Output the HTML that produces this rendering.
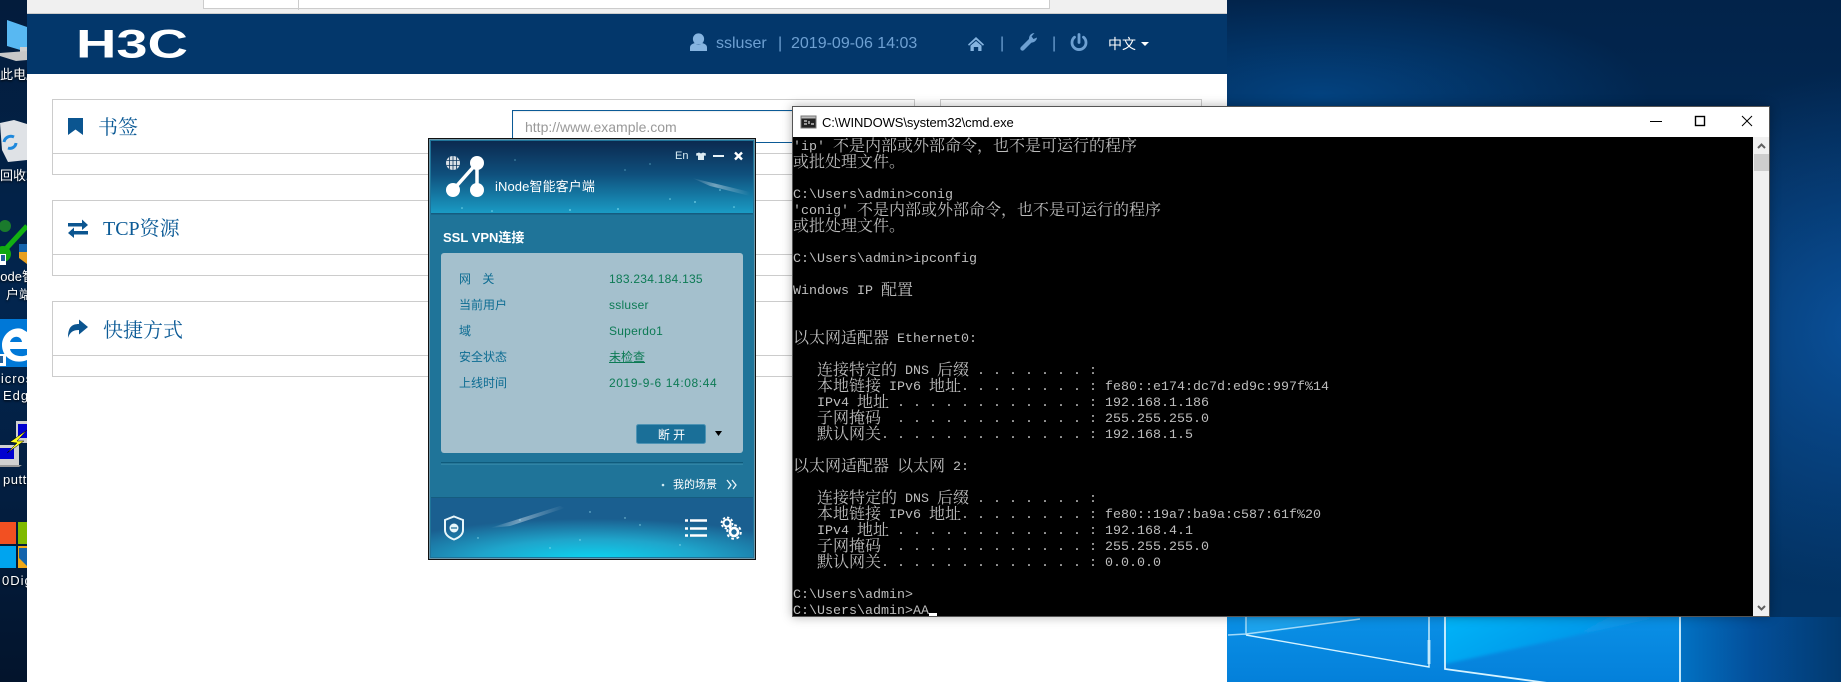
<!DOCTYPE html>
<html lang="zh"><head><meta charset="utf-8"><title>H3C</title>
<style>
*{box-sizing:border-box;margin:0;padding:0}
html,body{width:1841px;height:682px;overflow:hidden;background:#02244a;font-family:"Liberation Sans","Noto Sans CJK SC",sans-serif}
.a{position:absolute}
#bg{left:0;top:0;width:1841px;height:682px;background:
radial-gradient(ellipse 260px 260px at 1860px 330px,#0a5099,rgba(10,80,153,0) 100%),
radial-gradient(ellipse 330px 100px at 1320px 95px,#03427f,rgba(3,66,127,0) 100%),
radial-gradient(ellipse 200px 90px at 1290px 300px,#04488c,rgba(3,74,146,0) 100%),
linear-gradient(#02234a,#03305f 60%,#023466)}
#left{left:0;top:0;width:27px;height:682px;overflow:hidden;background:linear-gradient(#031c3c,#02254e 45%,#031f42 70%,#03142c);color:#fff;font-size:13px;text-shadow:0 1px 2px #000}
#left span{position:absolute;white-space:nowrap;line-height:16px}
#page{left:27px;top:0;width:1200px;height:682px;background:#fff}
#top{left:27px;top:0;width:1200px;height:14px;background:#f0f0f0;border-bottom:1px solid #ccc}
#addr{left:203px;top:-1px;width:847px;height:10px;background:#fff;border:1px solid #ccc}
#hd{left:27px;top:14px;width:1200px;height:60px;background:#03376b}
.p{position:absolute;border:1px solid #ccc;background:#fff}
.p .ln{position:absolute;left:0;right:0;top:53px;border-top:1px solid #ccc}
.tt{position:absolute;color:#0b5a96;font:20px/28px "Liberation Serif","Noto Serif CJK SC",serif;white-space:nowrap}
.ht{position:absolute;color:#6ea0d2;font-size:16px;line-height:20px;white-space:nowrap}
#inp{left:512px;top:110px;width:300px;height:33px;background:#fff;border:1px solid #0b5a96;color:#999;font-size:14px;line-height:20px;padding:6px 12px;box-shadow:inset 0 1px 1px rgba(0,0,0,.08)}
#cmd{left:792px;top:106px;width:978px;height:511px;background:#fff;border:1px solid #555;box-shadow:0 0 10px rgba(0,0,0,.3);overflow:hidden}
#ctl{position:absolute;left:29px;top:7px;font-size:13px;line-height:18px;letter-spacing:-.1px;color:#000;white-space:nowrap}
#term{position:absolute;left:0;top:30px;width:960px;height:480px;background:#000;color:#bdbdbd;font:13.333px/16px "Liberation Mono","Noto Serif CJK SC",monospace;overflow:hidden}
.l{height:16px;white-space:pre;line-height:21px}
.l i{font:16px/16px "Noto Serif CJK SC","Noto Sans CJK SC",serif;display:inline-block;height:16px;vertical-align:top}
#sb{position:absolute;left:960px;top:30px;width:17px;height:480px;background:#f0f0f0}
#ino{left:429px;top:139px;width:326px;height:420px;background:#1f7499;border:1px solid #6d97aa;box-shadow:0 0 0 1px #111}
#ino div,#ino span{position:absolute;white-space:nowrap}
.lb{left:29px;color:#0d6c92;font-size:12px;line-height:16px}
.vl{left:179px;color:#0c7a54;font-size:12px;line-height:16px;letter-spacing:.25px}
</style></head><body>
<div class="a" id="bg"></div>
<svg class="a" style="left:0;top:0" width="1841" height="682">
<defs>
<linearGradient id="lg1" x1="0" y1="0" x2="0" y2="1"><stop offset="0" stop-color="#0a90e6"/><stop offset="1" stop-color="#0480da"/></linearGradient>
<linearGradient id="lg2" x1="0" y1="0" x2="1" y2="0"><stop offset="0" stop-color="#0272c4"/><stop offset=".45" stop-color="#034f9a"/><stop offset="1" stop-color="#023a70"/></linearGradient>
<linearGradient id="lg3" x1="0" y1="0" x2="1" y2=".4"><stop offset="0" stop-color="#00b4f8"/><stop offset="1" stop-color="#0a8de4"/></linearGradient>
<filter id="bl"><feGaussianBlur stdDeviation="1.5"/></filter>
</defs>
<rect x="1680" y="617" width="161" height="65" fill="url(#lg2)"/>
<rect x="1227" y="617" width="453" height="65" fill="url(#lg1)"/>
<polygon points="1445,617 1660,617 1445,664" fill="url(#lg3)" filter="url(#bl)"/>
<polygon points="1246,617 1358,617 1246,635" fill="#1aa2ec" filter="url(#bl)"/>
<g fill="none" stroke="#d6f3ff">
<path d="M1246 617V635M1228 635L1246 634L1360 619" stroke-width="1.500" opacity=".75"/>
<path d="M1246 635L1429 667V617" stroke-width="1.400"/>
<path d="M1429 640V664" stroke-width="3" opacity=".7"/>
<path d="M1445 617V669L1650 697" stroke-width="1.800"/>
<path d="M1680 617V682" stroke-width="1.800"/>
</g>
</svg>

<div class="a" id="left">
<svg class="a" style="left:0;top:0" width="27" height="682">
<polygon points="7,20 27,27 27,52 7,46" fill="#58b8f2"/>
<rect x="20" y="47" width="7" height="6" fill="#d0d0d0"/>
<polygon points="0,53 27,51 27,60 16,61 0,56" fill="#c8c8c8"/>
<polygon points="0,123 14,120 27,124 27,160 8,162 2,150" fill="#dfe2e6"/>
<path d="M4 142a7 7 0 0 1 10-5M16 143a6 6 0 0 1-8 5" fill="none" stroke="#1e88dc" stroke-width="3"/>
<circle cx="5" cy="226" r="6" fill="#1a7a2c"/>
<path d="M3 252L27 226" stroke="#12b012" stroke-width="5"/>
<circle cx="3" cy="254" r="8" fill="#12a812"/>
<rect x="0" y="254" width="6" height="11" fill="#fff"/>
<rect x="1" y="255" width="4" height="6" fill="#26609a"/>
<path d="M19 244H27V264L19 258Z" fill="#e8a020"/><path d="M19 244H27V252H19Z" fill="#1464ac"/>
<rect x="0" y="319" width="27" height="48" fill="#0078d7"/>
<path d="M2 345C2 334 13 326 22 329L27 332V349H10C11 355 20 358 27 355V360C15 365 2 358 2 345ZM10 342H22C21 335 12 335 10 342Z" fill="#fff"/>
<rect x="0" y="354" width="6" height="12" fill="#fff"/><rect x="0" y="356" width="3" height="7" fill="#26609a"/>
<rect x="16" y="421" width="11" height="22" fill="#d0d0d0"/><rect x="18" y="424" width="9" height="14" fill="#0000d0"/>
<rect x="0" y="445" width="19" height="20" fill="#d0d0d0"/><rect x="0" y="448" width="14" height="11" fill="#0000d0"/>
<polygon points="0,465 22,465 19,467 0,467" fill="#999"/>
<polygon points="27,430 10,442 17,443 7,453 24,441 17,441" fill="#ffff20" stroke="#000" stroke-width=".5"/>
<rect x="0" y="522" width="16" height="22" fill="#f25022"/>
<rect x="18" y="522" width="9" height="22" fill="#7fba00"/>
<rect x="0" y="546" width="16" height="22" fill="#00a4ef"/>
<rect x="18" y="546" width="9" height="22" fill="#f0a818"/>
<path d="M19 548H27V566L19 558Z" fill="#1464ac"/>
</svg>
<span style="left:0;top:67px">此电脑</span>
<span style="left:0;top:168px">回收站</span>
<span style="left:-12px;top:269px">iNode智能</span>
<span style="left:6px;top:287px">户端</span>
<span style="left:-11px;top:371px;letter-spacing:1px">Micros</span>
<span style="left:3px;top:388px;letter-spacing:1px">Edge</span>
<span style="left:3px;top:472px;letter-spacing:.5px">putty</span>
<span style="left:2px;top:573px;letter-spacing:1px">0Digi</span>
</div>

<div class="a" id="page"></div>
<div class="a" id="top"></div>
<div class="a" id="addr"><div class="a" style="left:94px;top:0;height:10px;border-left:1px solid #ccc"></div></div>
<div class="a" id="hd"></div>
<svg class="a" style="left:0;top:14px" width="1227" height="60">
<text x="76" y="43.500" font-family="Liberation Sans" font-weight="700" font-size="40" fill="#fff" textLength="112" lengthAdjust="spacingAndGlyphs">H3C</text>
</svg>
<div class="ht" style="left:716px;top:34px">ssluser</div>
<div class="ht" style="left:778px;top:34px">|</div>
<div class="ht" style="left:791px;top:34px">2019-09-06 14:03</div>
<div class="ht" style="left:1000px;top:34px">|</div>
<div class="ht" style="left:1052px;top:34px">|</div>
<div class="a" style="left:1108px;top:34px;color:#fff;font-size:14px;line-height:20px">中文</div>
<svg class="a" style="left:680px;top:25px" width="480" height="40">
<g fill="#86b4e0" transform="translate(-680,-25)">
<circle cx="698.500" cy="39" r="5.600"/><path d="M690 51V47.500C690 44.500 693 43.500 695 43C697 45.500 700 45.500 702 43C704 43.500 707 44.500 707 47.500V51Z"/>
</g>
<g transform="translate(-680,-25)">
<path d="M976 37L984 44.500L983 45.700L976 39.600L969 45.700L968 44.500ZM970.500 45.600L976 41L981.500 45.600V51H978.200V47H973.800V51H970.500Z" fill="#86b4e0"/>
<path d="M1022.500 48.500L1030.500 40.500" stroke="#6ea0d2" stroke-width="4.400" stroke-linecap="round"/>
<path d="M1037 37.500A5.500 5.500 0 0 1 1029 42L1029 38A5.500 5.500 0 0 1 1034.500 33L1031.500 36.500L1033.500 39Z" fill="#6ea0d2"/>
<path d="M1074.500 37.200A7 7 0 1 0 1083.500 37.200" fill="none" stroke="#6ea0d2" stroke-width="2.800" stroke-linecap="round"/>
<path d="M1079 34.500V42.500" stroke="#6ea0d2" stroke-width="2.800" stroke-linecap="round"/>
<polygon points="1141,42 1149,42 1145,46" fill="#fff"/>
</g></svg>

<div class="p" style="left:52px;top:99px;width:863px;height:76px"><div class="ln"></div></div>
<div class="p" style="left:940px;top:99px;width:262px;height:76px"><div class="ln"></div></div>
<div class="p" style="left:52px;top:200px;width:863px;height:76px"><div class="ln"></div></div>
<div class="p" style="left:940px;top:200px;width:262px;height:76px"><div class="ln"></div></div>
<div class="p" style="left:52px;top:301px;width:863px;height:76px"><div class="ln"></div></div>
<div class="p" style="left:940px;top:301px;width:262px;height:76px"><div class="ln"></div></div>
<div class="tt" style="left:98px;top:114px">书签</div>
<div class="tt" style="left:103px;top:215px">TCP资源</div>
<div class="tt" style="left:103px;top:317px">快捷方式</div>
<svg class="a" style="left:0;top:0" width="100" height="350">
<path d="M68 118H83V135L75.500 129.500L68 135Z" fill="#0b5590"/>
<path d="M68 224H82V220.500L88 226L82 231V227.500H68ZM88 232H74V228.500L68 234L74 239V235.500H88Z" fill="#0b5590" transform="translate(0,-1)"/>
<path d="M88 327L79 319.500V324C71 324 68 328 68 338C70 332 73 330 79 330V334.500Z" fill="#0b5590"/>
</svg>
<div class="a" id="inp">http://www.example.com</div>

<div class="a" id="cmd">
<svg class="a" style="left:0;top:0" width="976" height="30">
<rect x="8" y="9" width="15" height="12" fill="#222" stroke="#777" stroke-width="1"/><rect x="8.500" y="9.500" width="14" height="2" fill="#bbb"/>
<path d="M11 14H14M11 17H14M16 14V17M18 17H21" stroke="#ddd" stroke-width="1.200"/>
<path d="M857 14.500H869" stroke="#000"/>
<rect x="898.500" y="9.500" width="9" height="9" fill="none" stroke="#000" stroke-width="1.400" transform="translate(4,0)"/>
<path d="M949 9L959 19M959 9L949 19" stroke="#000" fill="none"/>
</svg>
<div id="ctl">C:\WINDOWS\system32\cmd.exe</div>
<div id="term">
<div class="l">'ip' <i>不是内部或外部命令&#65292;也不是可运行的程序</i></div>
<div class="l"><i>或批处理文件。</i></div>
<div class="l"> </div>
<div class="l">C:\Users\admin&gt;conig</div>
<div class="l">'conig' <i>不是内部或外部命令&#65292;也不是可运行的程序</i></div>
<div class="l"><i>或批处理文件。</i></div>
<div class="l"> </div>
<div class="l">C:\Users\admin&gt;ipconfig</div>
<div class="l"> </div>
<div class="l">Windows IP <i>配置</i></div>
<div class="l"> </div>
<div class="l"> </div>
<div class="l"><i>以太网适配器</i> Ethernet0:</div>
<div class="l"> </div>
<div class="l">   <i>连接特定的</i> DNS <i>后缀</i> . . . . . . . :</div>
<div class="l">   <i>本地链接</i> IPv6 <i>地址</i>. . . . . . . . : fe80::e174:dc7d:ed9c:997f%14</div>
<div class="l">   IPv4 <i>地址</i> . . . . . . . . . . . . : 192.168.1.186</div>
<div class="l">   <i>子网掩码</i>  . . . . . . . . . . . . : 255.255.255.0</div>
<div class="l">   <i>默认网关</i>. . . . . . . . . . . . . : 192.168.1.5</div>
<div class="l"> </div>
<div class="l"><i>以太网适配器</i> <i>以太网</i> 2:</div>
<div class="l"> </div>
<div class="l">   <i>连接特定的</i> DNS <i>后缀</i> . . . . . . . :</div>
<div class="l">   <i>本地链接</i> IPv6 <i>地址</i>. . . . . . . . : fe80::19a7:ba9a:c587:61f%20</div>
<div class="l">   IPv4 <i>地址</i> . . . . . . . . . . . . : 192.168.4.1</div>
<div class="l">   <i>子网掩码</i>  . . . . . . . . . . . . : 255.255.255.0</div>
<div class="l">   <i>默认网关</i>. . . . . . . . . . . . . : 0.0.0.0</div>
<div class="l"> </div>
<div class="l">C:\Users\admin&gt;</div>
<div class="l">C:\Users\admin&gt;AA</div>
<div class="a" style="left:136px;top:476px;width:8px;height:4px;background:#fff"></div>
</div>
<div id="sb">
<div class="a" style="left:1px;top:17px;width:15px;height:17px;background:#cdcdcd"></div>
<svg class="a" style="left:0;top:0" width="17" height="480">
<path d="M5 11L8.500 7.500L12 11M5 469L8.500 472.500L12 469" fill="none" stroke="#606060" stroke-width="2"/>
</svg>
</div>
</div>

<div class="a" id="ino">
<svg class="a" style="left:0;top:0" width="324" height="418">
<defs>
<linearGradient id="ih" x1="0" y1="0" x2="0" y2="1"><stop offset="0" stop-color="#0b2a50"/><stop offset=".45" stop-color="#0f4f7c"/><stop offset="1" stop-color="#1a9dc6"/></linearGradient>
<radialGradient id="ib" cx=".5" cy="1.05" r=".7"><stop offset="0" stop-color="#0bd6f2"/><stop offset=".5" stop-color="#1fa5cb"/><stop offset="1" stop-color="#1a5f90"/></radialGradient>
<linearGradient id="cm" x1="0" y1="0" x2="1" y2="0"><stop offset="0" stop-color="#fff" stop-opacity="0"/><stop offset=".4" stop-color="#fff" stop-opacity=".4"/><stop offset="1" stop-color="#fff" stop-opacity="0"/></linearGradient>
</defs>
<rect x="1" y="1" width="322" height="73" fill="url(#ih)"/>
<rect x="1" y="73" width="322" height="1.500" fill="#155c80"/>
<polygon points="262,38 320,52 320,56 280,46" fill="url(#cm)"/>
<g fill="#8fe6f5" opacity=".8">
<circle cx="32" cy="68" r=".8"/><circle cx="62" cy="71" r=".8"/><circle cx="140" cy="70" r=".9"/><circle cx="188" cy="69" r=".9"/><circle cx="240" cy="59" r=".8"/><circle cx="265" cy="62" r=".9"/><circle cx="304" cy="67" r=".8"/><circle cx="85" cy="20" r=".6"/><circle cx="195" cy="30" r=".6"/><circle cx="220" cy="24" r=".6"/><circle cx="105" cy="43" r=".6"/><circle cx="290" cy="50" r=".8"/>
</g>
<rect x="1" y="357" width="322" height="1.500" fill="#155c80"/>
<rect x="1" y="358" width="322" height="59" fill="url(#ib)"/>
<polygon points="60,388 130,366 135,368 80,386" fill="url(#cm)"/>
<g fill="#a8eef8" opacity=".8"><circle cx="90" cy="380" r=".7"/><circle cx="160" cy="372" r=".7"/><circle cx="195" cy="378" r=".7"/><circle cx="150" cy="400" r=".7"/><circle cx="48" cy="398" r=".7"/><circle cx="210" cy="385" r=".7"/><circle cx="120" cy="408" r=".7"/><circle cx="250" cy="405" r=".7"/></g>
<rect x="11" y="113" width="302" height="200" rx="3" fill="#a4c0cd"/>
<rect x="11" y="322" width="302" height="1.500" fill="#0f5b7c"/><rect x="11" y="323.500" width="302" height="1" fill="#3f93b4"/>
<rect x="206.500" y="284.500" width="69" height="19" rx="2" fill="#1a6f98" stroke="#4d93b4"/>
<polygon points="285,291 292,291 288.500,296" fill="#000"/>
<circle cx="233" cy="345" r="1.300" fill="#cfeaf2"/>
<path d="M297 340L301 345L298 349M302 340L306 345L303 349" fill="none" stroke="#eaf6fa" stroke-width="1.300"/>
<g transform="translate(-430,-140)">
<circle cx="453" cy="163" r="7" fill="#d8dfe6"/>
<path d="M446.500 160.500H459.500M446.500 165.500H459.500M453 156V170M449.500 157V169M456.500 157V169" stroke="#0f3a60" stroke-width=".8"/>
<path d="M453 190L477 163V190" fill="none" stroke="#fff" stroke-width="3.500"/>
<circle cx="477" cy="163" r="7" fill="#fff"/><circle cx="453" cy="190" r="7" fill="#fff"/><circle cx="477" cy="190" r="7" fill="#fff"/>
<path d="M696 153.500L699 152.500L701 153.500L703 152.500L706 153.500L705.500 156L704 155.500V160H698V155.500L696.500 156Z" fill="#dcebf2"/>
<path d="M713 156H724" stroke="#e8f3f8" stroke-width="2"/>
<path d="M735 152.500L742 159.500M742 152.500L735 159.500" stroke="#fff" stroke-width="2.400"/>
<path d="M454 516.500L463 520V530C463 535 458 538 454 539.500C450 538 445 535 445 530V520Z" fill="none" stroke="#e8f6fa" stroke-width="2"/>
<circle cx="454" cy="528" r="4.500" fill="#e8f6fa"/><path d="M451 528H457" stroke="#1b6a94" stroke-width="1.200"/>
<path d="M685 520.500H688M690 520.500H707M685 528.500H688M690 528.500H707M685 535.500H688M690 535.500H707" stroke="#fff" stroke-width="2.600"/>
<circle cx="727" cy="523" r="3.500" fill="none" stroke="#fff" stroke-width="2"/>
<circle cx="727" cy="523" r="5.500" fill="none" stroke="#fff" stroke-width="1.800" stroke-dasharray="2.300 2"/>
<circle cx="734" cy="532" r="4" fill="none" stroke="#fff" stroke-width="2.600"/>
<circle cx="734" cy="532" r="6.800" fill="none" stroke="#fff" stroke-width="2" stroke-dasharray="2.700 2.640"/>
</g>
</svg>
<div style="left:65px;top:38px;color:#fff;font-size:13px;line-height:18px;letter-spacing:.1px">iNode智能客户端</div>
<div style="left:245px;top:10px;color:#d8ecf4;font-size:11px;line-height:12px">En</div>
<div style="left:13px;top:90px;color:#fff;font-size:13px;font-weight:700;line-height:16px">SSL VPN连接</div>
<div class="lb" style="top:131px;word-spacing:8px">网 关</div><div class="vl" style="top:131px">183.234.184.135</div>
<div class="lb" style="top:157px">当前用户</div><div class="vl" style="top:157px">ssluser</div>
<div class="lb" style="top:183px">域</div><div class="vl" style="top:183px">Superdo1</div>
<div class="lb" style="top:209px">安全状态</div><div class="vl" style="top:209px;text-decoration:underline;letter-spacing:0">未检查</div>
<div class="lb" style="top:235px">上线时间</div><div class="vl" style="top:235px;letter-spacing:.6px">2019-9-6 14:08:44</div>
<div style="left:207px;top:285px;width:69px;text-align:center;color:#fff;font-size:12px;line-height:20px">断 开</div>
<div style="left:243px;top:338px;color:#fff;font-size:11px;line-height:14px">我的场景</div>
</div>
</body></html>
